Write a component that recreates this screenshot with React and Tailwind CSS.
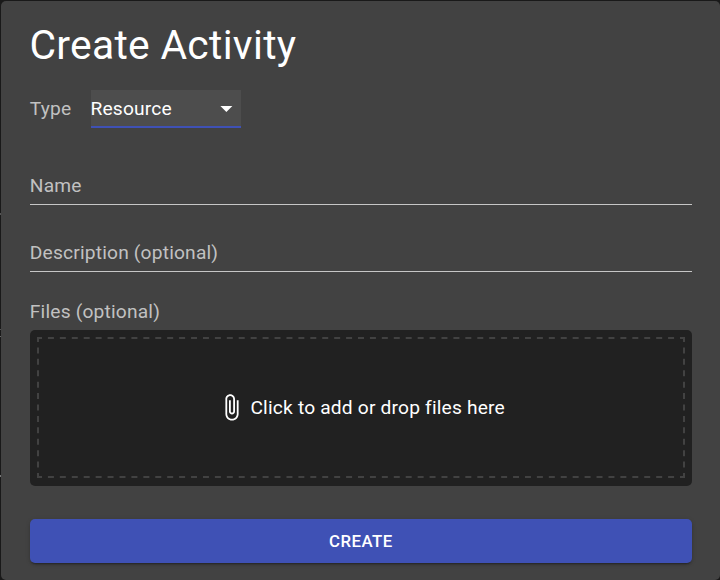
function TextField({ label }) {
  return (
    <label className="block h-[38px] border-b border-[#c6c6c6] text-[#c1c1c1]">{label}</label>
  );
}

function DashedOutline() {
  return (
    <svg viewBox="0 0 648 141" className="absolute inset-0 h-[141px] w-[648px]" fill="none" stroke="#424242" strokeWidth="2">
      <path d="M0 1H648M0 140H648" strokeDasharray="6 5.926" strokeDashoffset="1" />
      <path d="M1 0V141M647 0V141" strokeDasharray="6 5.417" strokeDashoffset="1" />
    </svg>
  );
}

export default function App() {
  return (
    <div className="relative h-[580px] w-[720px] overflow-hidden bg-[#191919] pt-px pl-px font-['Roboto',sans-serif] text-[19.2px] leading-[38px] tracking-[0.18px] text-white">
      <i className="absolute top-[213px] left-0 h-[2px] w-px bg-[#555]" />
      <i className="absolute top-[329px] left-0 h-px w-px bg-[#555]" />
      <i className="absolute top-[336px] left-0 h-px w-px bg-[#666]" />
      <i className="absolute top-[475px] left-0 h-[2px] w-px bg-[#777]" />
      <main className="flex h-[579px] flex-col rounded-[5px] bg-[#424242] pr-[28px] pl-[28.8px]">
        <h1 className="mt-[20px] -ml-[0.4px] h-[48px] text-[40.8px] leading-[48px] tracking-[0.3px]">Create Activity</h1>
        <div className="mt-[21px] flex h-[38px] items-start">
          <span className="w-[61.2px]">
            <span className="text-[#c1c1c1]">Type</span>
          </span>
          <button className="flex h-[38px] w-[150px] items-center justify-between border-b-2 border-[#3f51b5] bg-[#4d4d4d] text-left">
            <span className="-ml-[0.5px] pt-[2px]">Resource</span>
            <svg viewBox="0 0 24 24" className="h-[28.8px] w-[28.8px] fill-white"><path d="M7 10l5 5 5-5z" /></svg>
          </button>
        </div>
        <div className="mt-[39px] flex flex-col gap-[29px]">
          <TextField label="Name" />
          <TextField label="Description (optional)" />
        </div>
        <div className="mt-[25px] h-[33px] leading-[30px] text-[#c1c1c1]">Files (optional)</div>
        <div className="h-[156px] shrink-0 rounded-[5px] bg-[#212121] px-[7px] pt-[7px] pb-[8px]">
          <div className="relative flex h-full items-center justify-center">
            <DashedOutline />
            <svg viewBox="0 0 24 24" className="mr-[4.8px] h-[28.8px] w-[28.8px] fill-white">
              <path d="M16.5 6v11.5c0 2.21-1.79 4-4 4s-4-1.79-4-4V5c0-1.38 1.12-2.5 2.5-2.5s2.5 1.12 2.5 2.5v10.5c0 .55-.45 1-1 1s-1-.45-1-1V6H10v9.5c0 1.38 1.12 2.5 2.5 2.5s2.5-1.12 2.5-2.5V5c0-2.21-1.79-4-4-4S7 2.79 7 5v12.5c0 3.04 2.46 5.5 5.5 5.5s5.5-2.46 5.5-5.5V6h-1.5z" />
            </svg>
            <span>Click to add or drop files here</span>
          </div>
        </div>
        <button className="mt-[33px] h-[44px] shrink-0 rounded-[5px] bg-[#3f51b5] text-[16.8px] leading-[45px] font-medium tracking-[0.48px] shadow-[0_3px_1px_-2px_rgba(0,0,0,0.2),0_2px_2px_0_rgba(0,0,0,0.14),0_1px_5px_0_rgba(0,0,0,0.12)]">CREATE</button>
      </main>
    </div>
  );
}
